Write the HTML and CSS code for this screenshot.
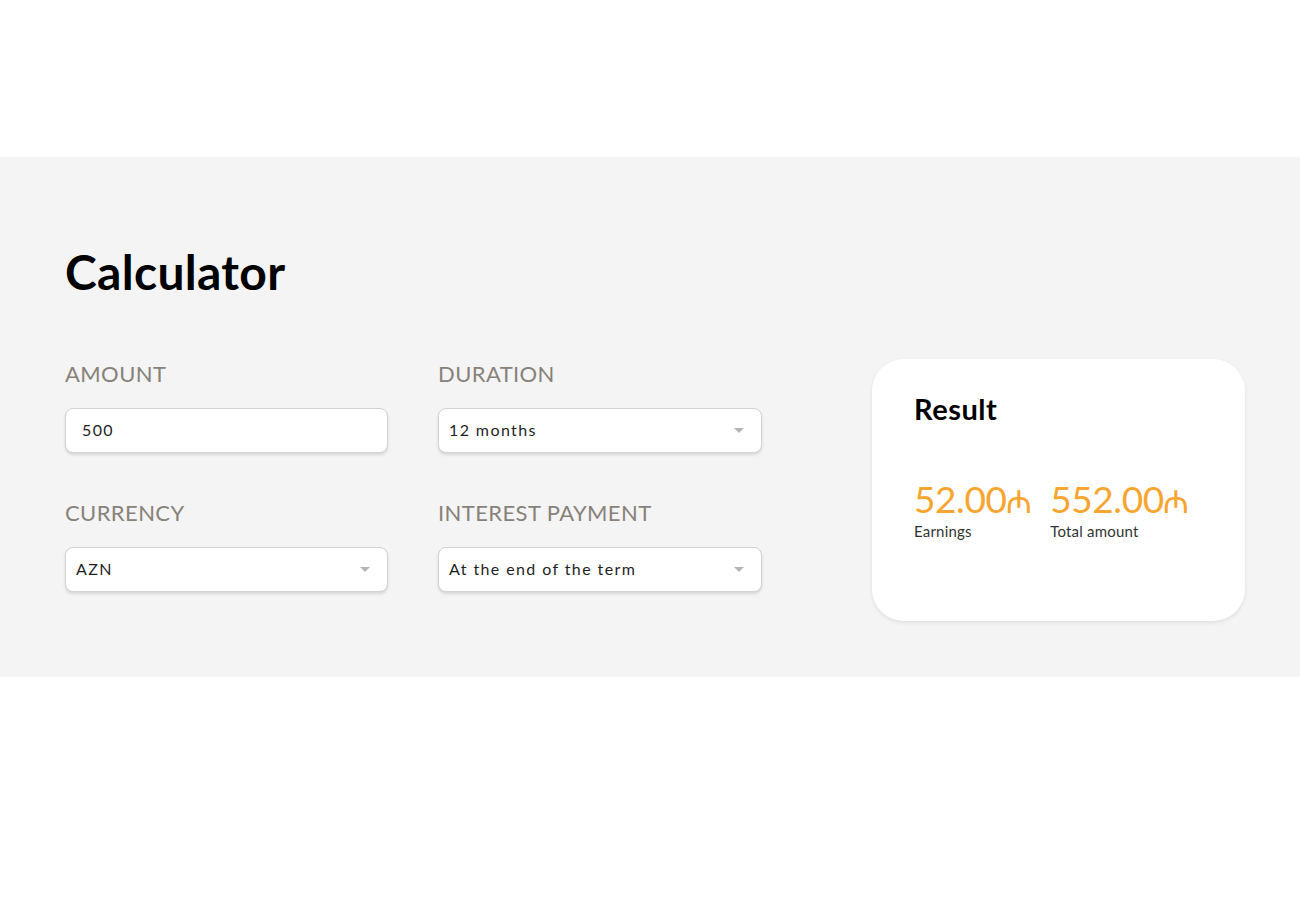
FILE: index.html
```html
<!DOCTYPE html>
<html lang="en">
<head>
<meta charset="utf-8">
<title>Calculator</title>
<link rel="stylesheet" href="styles.css">
</head>
<body>
<div class="top-space"></div>
<section class="calc">
  <div class="container">
    <h1 class="calc-title">Calculator</h1>
    <div class="calc-body">
      <div class="form">
        <div class="field">
          <div class="label">AMOUNT</div>
          <div class="input input-text">500</div>
        </div>
        <div class="field">
          <div class="label">DURATION</div>
          <div class="input input-select"><span>12 months</span><i class="caret"></i></div>
        </div>
        <div class="field">
          <div class="label">CURRENCY</div>
          <div class="input input-select"><span>AZN</span><i class="caret"></i></div>
        </div>
        <div class="field">
          <div class="label">INTEREST PAYMENT</div>
          <div class="input input-select"><span>At the end of the term</span><i class="caret"></i></div>
        </div>
      </div>
      <div class="result">
        <h2 class="result-title">Result</h2>
        <div class="result-values">
          <div class="value">
            <div class="value-num">52.00<span class="manat">₼</span></div>
            <div class="value-label">Earnings</div>
          </div>
          <div class="value">
            <div class="value-num">552.00<span class="manat">₼</span></div>
            <div class="value-label">Total amount</div>
          </div>
        </div>
      </div>
    </div>
  </div>
</section>
<div class="bottom-space"></div>
</body>
</html>
```
FILE: styles.css
```css
* { box-sizing: border-box; }
body {
  margin: 0;
  background: #fff;
  font-family: Lato, "Open Sans", "DejaVu Sans", sans-serif;
  color: #000;
}
.top-space { height: 157px; }
.bottom-space { height: 223px; }
.calc {
  background: #f4f4f4;
  padding: 86px 0 56px;
}
.container {
  width: 1180px;
  margin-left: 65px;
}
.calc-title {
  margin: 0;
  font-size: 48px;
  line-height: 58px;
  font-weight: 700;
  letter-spacing: 0.3px;
}
.calc-body {
  margin-top: 58px;
  display: flex;
  justify-content: space-between;
  align-items: flex-start;
}
.form {
  display: grid;
  grid-template-columns: 323px 324px;
  column-gap: 50px;
  row-gap: 47px;
  padding-top: 2px;
}
.label {
  font-size: 22px;
  line-height: 26px;
  font-weight: 400;
  color: #878279;
  letter-spacing: 0.4px;
  margin-bottom: 21px;
}
.input {
  height: 45px;
  background: #fff;
  border: 1px solid #d3d3d3;
  border-radius: 8px;
  box-shadow: 0 2px 3px rgba(0,0,0,0.12);
  display: flex;
  align-items: center;
  font-size: 16px;
  letter-spacing: 1.4px;
  color: #1f1f1f;
  padding-bottom: 3px;
}
.input-text { padding-left: 16px; }
.input-select {
  padding-left: 10px;
  padding-right: 16px;
  justify-content: space-between;
}
.caret {
  width: 0;
  height: 0;
  border-left: 5px solid transparent;
  border-right: 5px solid transparent;
  border-top: 5px solid #b5b5b5;
  margin-top: 3px;
  margin-right: 1px;
}
.result {
  width: 373px;
  height: 262px;
  background: #fff;
  border-radius: 32px;
  box-shadow: 0 2px 4px rgba(0,0,0,0.08);
  padding: 34px 42px;
}
.result-title {
  margin: 0;
  font-size: 29px;
  line-height: 32px;
  font-weight: 700;
  letter-spacing: 0.5px;
}
.result-values {
  margin-top: 54px;
  display: flex;
  gap: 19px;
}
.value-num {
  font-size: 37px;
  line-height: 40px;
  font-weight: 400;
  color: #f8a530;
  letter-spacing: -0.4px;
}
.manat {
  font-family: "DejaVu Sans", sans-serif;
  font-size: 32px;
  margin-left: -1px;
}
.value-label {
  font-size: 15px;
  line-height: 18px;
  color: #333;
  letter-spacing: 0.2px;
}
```
